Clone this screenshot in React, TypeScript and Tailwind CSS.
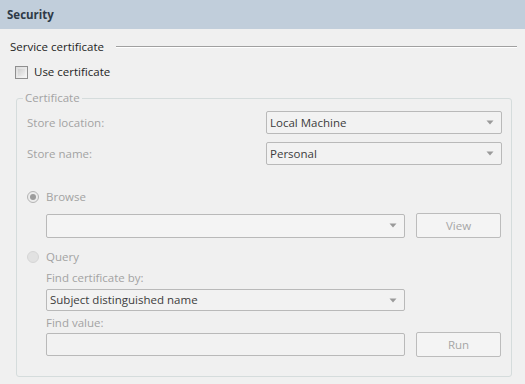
function Arrow() {
  return (
    <svg width="8" height="5" viewBox="0 0 8 5" className="shrink-0">
      <path d="M0.5 0.5 H7.5 L4 4.5 Z" fill="#9a9a9a" />
    </svg>
  );
}

function Combo({ text, className }: { text?: string; className: string }) {
  return (
    <div
      className={`flex items-center justify-between rounded-[2px] border border-[#b9b9b9] bg-[#f2f2f2] pl-[3px] pr-[7px] text-[#3c3c3c] ${className}`}
    >
      <span>{text}</span>
      <Arrow />
    </div>
  );
}

function Button({ label, className }: { label: string; className: string }) {
  return (
    <div
      className={`flex w-[85px] items-center justify-center rounded-[2px] border border-[#bcbcbc] bg-[#f4f4f4] text-[#a6a6a6] ${className}`}
    >
      {label}
    </div>
  );
}

export default function App() {
  return (
    <div
      className="h-[384px] w-[525px] overflow-hidden bg-[#f0f0f0] text-[11.5px] leading-[16px] text-[#1e1e1e]"
      style={{ fontFamily: '"Open Sans", "Noto Sans", sans-serif' }}
    >
      <header className="flex h-[29px] items-center bg-[#c1cedb] px-[7px] font-bold text-[#2e3a47]">
        Security
      </header>

      <div className="mt-[10px] flex items-center pl-[10px] pr-[8px]">
        <span>Service certificate</span>
        <div className="ml-[12px] h-[2px] flex-1 border-t border-b border-t-[#a0a0a0] border-b-white" />
      </div>

      <div className="mt-[9px] flex items-center pl-[15px]">
        <div className="h-[13px] w-[13px] border border-[#8f8f8f] bg-gradient-to-br from-[#dcdcdc] to-[#f6f6f6] p-[2px]">
          <div className="h-full w-full bg-gradient-to-br from-[#cfcfcf] to-[#f0f0f0]" />
        </div>
        <span className="ml-[6px]">Use certificate</span>
      </div>

      <fieldset className="ml-[16px] mt-[10px] h-[287px] w-[493px] rounded-[3px] border border-[#d5dcdc] px-[10px] text-[#a3a3a3]">
        <legend className="ml-[-4px] px-[2px]">Certificate</legend>

        <div className="mt-[5px] flex items-center justify-between">
          <span>Store location:</span>
          <Combo text="Local Machine" className="mr-[-1px] h-[23px] w-[236px]" />
        </div>
        <div className="mt-[8px] flex items-center justify-between">
          <span>Store name:</span>
          <Combo text="Personal" className="mr-[-1px] h-[23px] w-[236px]" />
        </div>

        <div className="mt-[24px] flex items-center">
          <div className="flex h-[12px] w-[12px] items-center justify-center rounded-full border border-[#b4b4b4] bg-[#ececec]">
            <div className="h-[6px] w-[6px] rounded-full bg-[#9c9c9c]" />
          </div>
          <span className="ml-[7px]">Browse</span>
        </div>

        <div className="mt-[8px] flex items-center pl-[19px]">
          <div className="flex h-[24px] w-[359px] items-center justify-end rounded-[2px] border border-[#b9b9b9] bg-[#f4f4f4] pr-[7px]">
            <Arrow />
          </div>
          <Button label="View" className="ml-[11px] h-[25px]" />
        </div>

        <div className="mt-[11px] flex items-center">
          <div className="h-[12px] w-[12px] rounded-full border border-[#d6d6d6] bg-[#e2e2e2]" />
          <span className="ml-[7px]">Query</span>
        </div>

        <div className="mt-[5px] pl-[19px]">Find certificate by:</div>
        <div className="mt-[3px] pl-[19px]">
          <Combo text="Subject distinguished name" className="h-[22px] w-[359px]" />
        </div>
        <div className="mt-[4px] pl-[19px]">Find value:</div>
        <div className="mt-[1px] flex items-center pl-[19px]">
          <div className="h-[23px] w-[359px] rounded-[2px] border border-[#b9b9b9] bg-[#f2f2f2]" />
          <Button label="Run" className="ml-[11px] h-[25px]" />
        </div>
      </fieldset>
    </div>
  );
}
